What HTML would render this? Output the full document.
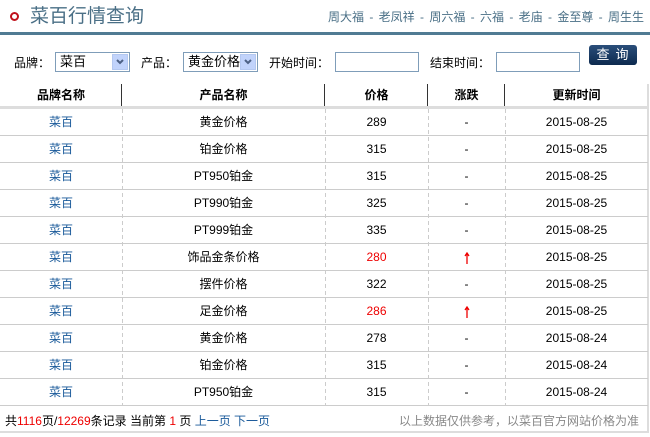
<!DOCTYPE html>
<html><head><meta charset="utf-8"><style>
*{margin:0;padding:0;box-sizing:border-box}
body{width:650px;height:437px;background:#fff;font-family:"Liberation Sans","Noto Sans CJK SC",sans-serif;font-size:12px;color:#000;position:relative;overflow:hidden}
.a{position:absolute}
.title{left:30px;top:5px;font-size:19px;color:#4a6f86;line-height:24px}
.dot{left:10px;top:12px;width:9px;height:9px;border:2px solid #c0121c;border-radius:50%}
.nav{right:6px;top:8px;color:#4a6f86;font-size:12px;word-spacing:2px}
.line{left:0;top:32px;width:650px;height:3px;background:#507b93}
.lbl{top:54px;font-size:12px}
.sel{top:52px;height:20px;border:1px solid #7f9db9;font-size:13px;line-height:18px;padding-left:4px;background:#fff}
.sel i{position:absolute;right:1px;top:1px;width:16px;height:16px;background:#c1d3fb;border:1px solid #b4c8f0}
.inp{top:52px;height:20px;border:1px solid #7f9db9;background:#fff}
.btn{left:589px;top:45px;width:48px;height:20px;background:linear-gradient(#2a4e7a,#0d2a4f);color:#fff;border-radius:3px;font-size:13px;text-align:center;line-height:20px;letter-spacing:6px;padding-left:5px}
.hd{top:84px;height:22px;font-weight:bold;font-size:12px;line-height:22px;text-align:center}
.vs{top:84px;width:1px;height:22px;background:#333}
.gb{left:0;top:106px;width:648px;height:3px;background:#ddd}
.row{left:0;width:648px;height:27px;border-bottom:1px solid #ccc;line-height:27px}
.row span{position:absolute;text-align:center;top:0}
.c1{left:0;width:122px;color:#1a5a9a}.c2{left:122px;width:203px}.c3{left:325px;width:103px}.c4{left:428px;width:77px}.c5{left:505px;width:143px}
.dv{top:109px;height:297px;width:1px;background:repeating-linear-gradient(#ccc 0 4px,transparent 4px 7px)}
.r{color:#e00}
.up{display:inline-block;width:6px;height:12px;vertical-align:middle}
</style></head><body>
<div class="a dot"></div>
<div class="a title">菜百行情查询</div>
<div class="a nav">周大福 - 老凤祥 - 周六福 - 六福 - 老庙 - 金至尊 - 周生生</div>
<div class="a line"></div>
<div class="a lbl" style="left:14px">品牌：</div>
<div class="a sel" style="left:55px;width:75px">菜百<i><svg width="14" height="14" viewBox="0 0 14 14"><path d="M4 5l3 3 3-3" stroke="#4d6185" stroke-width="2" fill="none"/></svg></i></div>
<div class="a lbl" style="left:141px">产品：</div>
<div class="a sel" style="left:183px;width:75px">黄金价格<i><svg width="14" height="14" viewBox="0 0 14 14"><path d="M4 5l3 3 3-3" stroke="#4d6185" stroke-width="2" fill="none"/></svg></i></div>
<div class="a lbl" style="left:269px">开始时间：</div>
<div class="a inp" style="left:335px;width:84px"></div>
<div class="a lbl" style="left:430px">结束时间：</div>
<div class="a inp" style="left:496px;width:84px"></div>
<div class="a btn">查询</div>
<div class="a hd" style="left:0;width:122px">品牌名称</div>
<div class="a hd" style="left:122px;width:203px">产品名称</div>
<div class="a hd" style="left:325px;width:103px">价格</div>
<div class="a hd" style="left:428px;width:77px">涨跌</div>
<div class="a hd" style="left:505px;width:143px">更新时间</div>
<div class="a vs" style="left:121px"></div><div class="a vs" style="left:324px"></div><div class="a vs" style="left:427px"></div><div class="a vs" style="left:504px"></div>
<div class="a gb"></div>
<div class="a" style="left:647px;top:84px;width:2px;height:349px;background:#ddd"></div>

<div class="a row" style="top:109px"><span class="c1">菜百</span><span class="c2">黄金价格</span><span class="c3">289</span><span class="c4">-</span><span class="c5">2015-08-25</span></div>
<div class="a row" style="top:136px"><span class="c1">菜百</span><span class="c2">铂金价格</span><span class="c3">315</span><span class="c4">-</span><span class="c5">2015-08-25</span></div>
<div class="a row" style="top:163px"><span class="c1">菜百</span><span class="c2">PT950铂金</span><span class="c3">315</span><span class="c4">-</span><span class="c5">2015-08-25</span></div>
<div class="a row" style="top:190px"><span class="c1">菜百</span><span class="c2">PT990铂金</span><span class="c3">325</span><span class="c4">-</span><span class="c5">2015-08-25</span></div>
<div class="a row" style="top:217px"><span class="c1">菜百</span><span class="c2">PT999铂金</span><span class="c3">335</span><span class="c4">-</span><span class="c5">2015-08-25</span></div>
<div class="a row" style="top:244px"><span class="c1">菜百</span><span class="c2">饰品金条价格</span><span class="c3 r">280</span><span class="c4"><svg class="up" viewBox="0 0 6 12"><path d="M3 1v11M1 4l2-3 2 3" stroke="#e00" stroke-width="1.3" fill="none"/></svg></span><span class="c5">2015-08-25</span></div>
<div class="a row" style="top:271px"><span class="c1">菜百</span><span class="c2">摆件价格</span><span class="c3">322</span><span class="c4">-</span><span class="c5">2015-08-25</span></div>
<div class="a row" style="top:298px"><span class="c1">菜百</span><span class="c2">足金价格</span><span class="c3 r">286</span><span class="c4"><svg class="up" viewBox="0 0 6 12"><path d="M3 1v11M1 4l2-3 2 3" stroke="#e00" stroke-width="1.3" fill="none"/></svg></span><span class="c5">2015-08-25</span></div>
<div class="a row" style="top:325px"><span class="c1">菜百</span><span class="c2">黄金价格</span><span class="c3">278</span><span class="c4">-</span><span class="c5">2015-08-24</span></div>
<div class="a row" style="top:352px"><span class="c1">菜百</span><span class="c2">铂金价格</span><span class="c3">315</span><span class="c4">-</span><span class="c5">2015-08-24</span></div>
<div class="a row" style="top:379px"><span class="c1">菜百</span><span class="c2">PT950铂金</span><span class="c3">315</span><span class="c4">-</span><span class="c5">2015-08-24</span></div>
<div class="a dv" style="left:122px"></div><div class="a dv" style="left:325px"></div><div class="a dv" style="left:428px"></div><div class="a dv" style="left:505px"></div>

<div class="a" style="left:5px;top:412px">共<span class="r">1116</span>页/<span class="r">12269</span>条记录 当前第 <span class="r">1</span> 页 <span style="color:#1a5a9a">上一页</span> <span style="color:#1a5a9a">下一页</span></div>
<div class="a" style="right:11px;top:412px;color:#888">以上数据仅供参考，以菜百官方网站价格为准</div>
<div class="a" style="left:0;top:431px;width:649px;height:2px;background:#ddd"></div>
</body></html>
